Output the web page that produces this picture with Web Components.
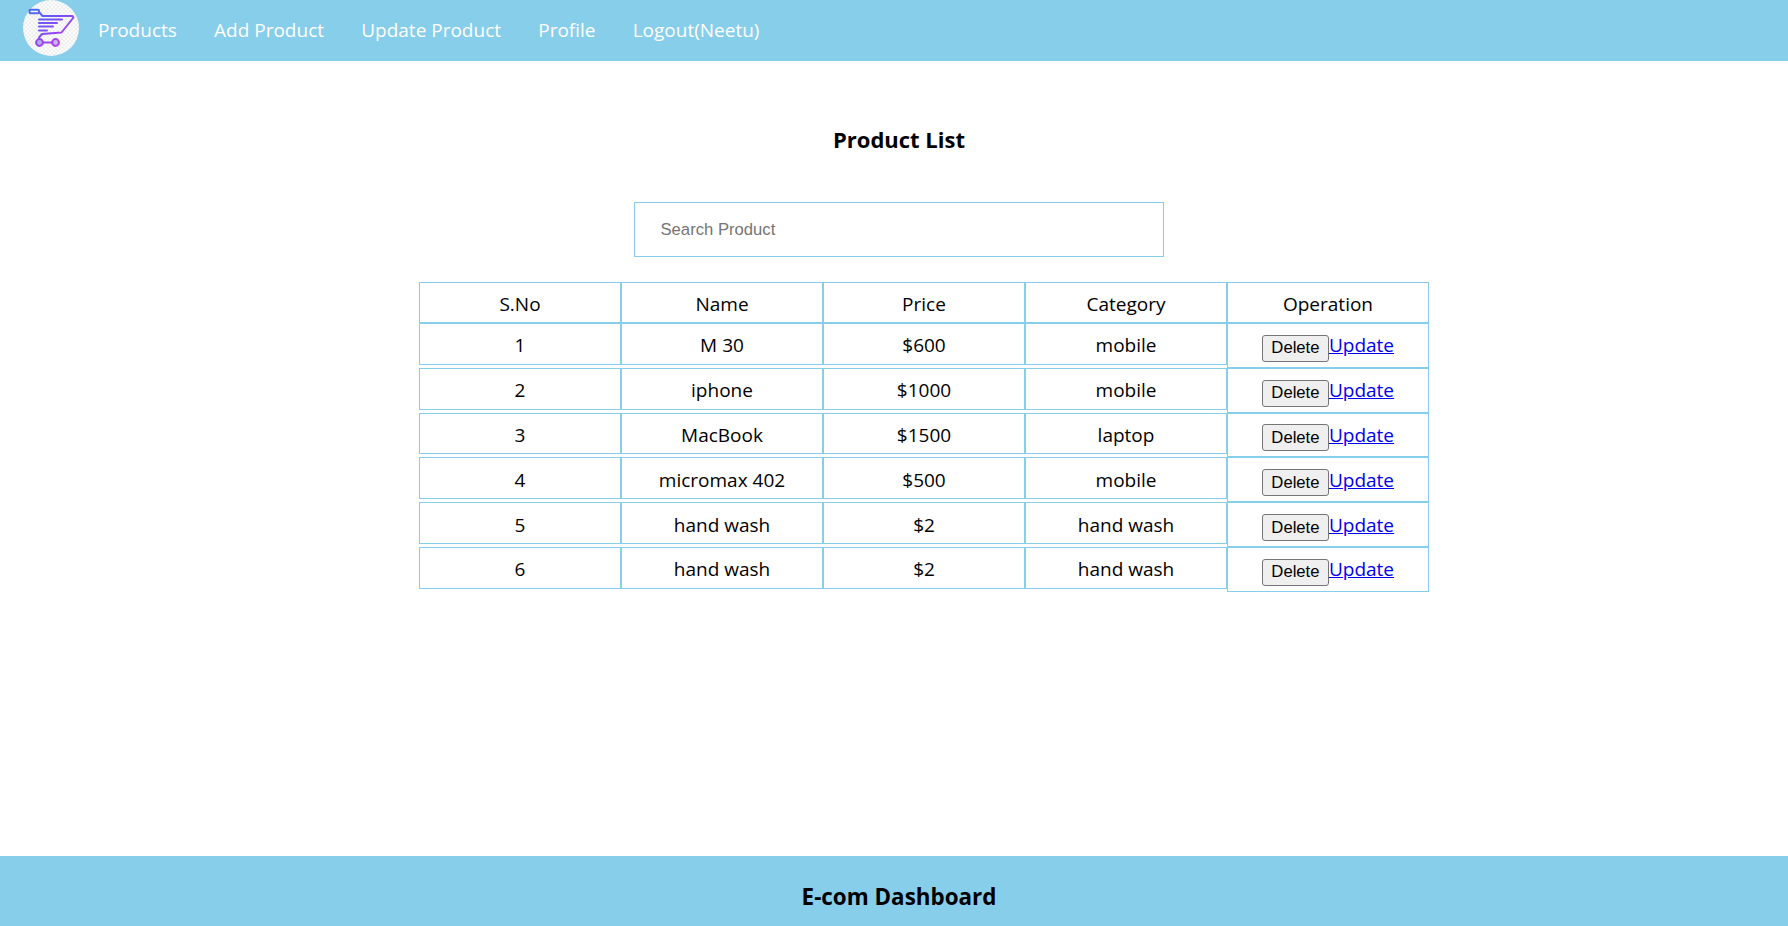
<!DOCTYPE html>
<html><head><meta charset="utf-8"><style>
html,body{margin:0;padding:0;background:#fff}
body{font-family:"Open Sans","Noto Sans",sans-serif;color:#000}
</style></head><body>
<template id="t-app"><style>
:host{display:flex;flex-direction:column;height:926px;overflow:hidden}
main{display:block;flex:1}
</style><slot name="top"></slot><main><slot></slot></main><slot name="bottom"></slot></template>

<template id="t-nav"><style>
:host{display:flex;align-items:flex-start;height:61px;background:#87ceeb;flex:none}
svg{width:56px;height:56px;margin-left:23px;flex:none;display:block}
nav{display:flex;margin-left:19px;gap:37.200px;padding-top:17px}
a{color:#fff;text-decoration:none;font-size:19px;line-height:26px;white-space:nowrap}
</style>
<svg viewBox="0 0 56 56" aria-hidden="true">
<defs>
<pattern id="ck" width="4" height="4" patternUnits="userSpaceOnUse"><rect width="4" height="4" fill="#fbfbfb"/><rect width="2" height="2" fill="#f0f0f0"/><rect x="2" y="2" width="2" height="2" fill="#f0f0f0"/></pattern>
<linearGradient id="gr" gradientUnits="userSpaceOnUse" x1="10" y1="10" x2="34" y2="46"><stop offset="0" stop-color="#4a6cf5"/><stop offset="0.5" stop-color="#7a50f5"/><stop offset="1" stop-color="#b83cf0"/></linearGradient>
</defs>
<circle cx="28" cy="28" r="28" fill="url(#ck)"/>
<g fill="none" stroke="url(#gr)" stroke-width="2" stroke-linecap="round" stroke-linejoin="round">
<rect x="6.500" y="9.800" width="9.500" height="3.400" rx="1"/>
<path d="M16 12L19.500 16H49.500L50.500 17.500L38.500 32.500L19 34L16 37.500"/>
<path d="M16 19.500H39M16 23H34M16 26.500H30M16 30.500H24"/>
<path d="M20 42.500H29"/>
<circle cx="16.500" cy="42.500" r="3.400" fill="#b9a6f5"/>
<circle cx="32.500" cy="42.500" r="3.400" fill="#c8b4f6"/>
</g></svg>
<nav><a>Products</a><a>Add Product</a><a>Update Product</a><a>Profile</a><a>Logout(Neetu)</a></nav>
</template>

<template id="t-footer"><style>
:host{display:block;box-sizing:border-box;height:70px;padding:25px 0 0 10px;background:#87ceeb;flex:none;text-align:center;font-weight:700;font-size:22.400px;line-height:32px}
</style><slot></slot></template>

<template id="t-list"><style>
:host{display:block;padding-top:62px}
h1{margin:0;text-align:center;font-size:22px;line-height:32px;font-weight:700}
.wrap{padding-left:10px}
.s{display:block;box-sizing:border-box;width:530px;height:55px;margin:47px auto 25px;border:1px solid #87ceeb;padding:0 25.500px;font:16.670px "Liberation Sans",sans-serif;outline:0}
.s::placeholder{color:#757575;opacity:1}
.table{margin-left:419px;width:1010px}
</style>
<div class="wrap"><h1>Product List</h1><input class="s" placeholder="Search Product"></div>
<div class="table"><slot></slot></div>
</template>

<template id="t-row"><style>
:host{display:flow-root}
</style><slot></slot></template>

<template id="t-cell"><style>
:host{float:left;box-sizing:border-box;width:202px;border:1px solid #87ceeb;text-align:center;font-size:19px;line-height:26px;padding:var(--p,8.400px) 0 0;height:var(--h,41.800px)}
:host([op]){height:var(--oh,44.800px)}
button{font:16.670px "Liberation Sans",sans-serif;height:27px;width:67px;padding:0;box-sizing:border-box;border:1px solid #767676;border-radius:3px;background:#efefef;color:#000;vertical-align:-1px;margin:0}
a{color:#00e;text-decoration:underline}
</style><slot></slot><span id="o"></span></template>

<ecom-app>
<ecom-nav slot="top"></ecom-nav>
<product-list id="pl"></product-list>
<ecom-footer slot="bottom">E-com Dashboard</ecom-footer>
</ecom-app>

<script>
function mk(name,id,extra){customElements.define(name,class extends HTMLElement{
 constructor(){super();this.attachShadow({mode:'open'}).append(document.getElementById(id).content.cloneNode(true));}
 connectedCallback(){extra&&extra.call(this)}
});}
mk('ecom-nav','t-nav');mk('ecom-footer','t-footer');mk('product-list','t-list');mk('list-row','t-row');
mk('list-cell','t-cell',function(){
 if(this.hasAttribute('op')){this.shadowRoot.getElementById('o').innerHTML='<button>Delete</button><a href="#">Update</a>';}
});
mk('ecom-app','t-app');
const rows=[['S.No','Name','Price','Category','Operation'],['1','M 30','$600','mobile'],['2','iphone','$1000','mobile'],['3','MacBook','$1500','laptop'],['4','micromax 402','$500','mobile'],['5','hand wash','$2','hand wash'],['6','hand wash','$2','hand wash']];
const pl=document.getElementById('pl');
rows.forEach((r,i)=>{const row=document.createElement('list-row');
 r.forEach(t=>{const c=document.createElement('list-cell');c.textContent=t;if(i==0){c.style.setProperty('--h','41px');c.style.setProperty('--p','7.500px')}row.append(c)});
 if(i){const c=document.createElement('list-cell');c.setAttribute('op','');row.append(c)}
 pl.append(row)});
</script>
</body></html>
